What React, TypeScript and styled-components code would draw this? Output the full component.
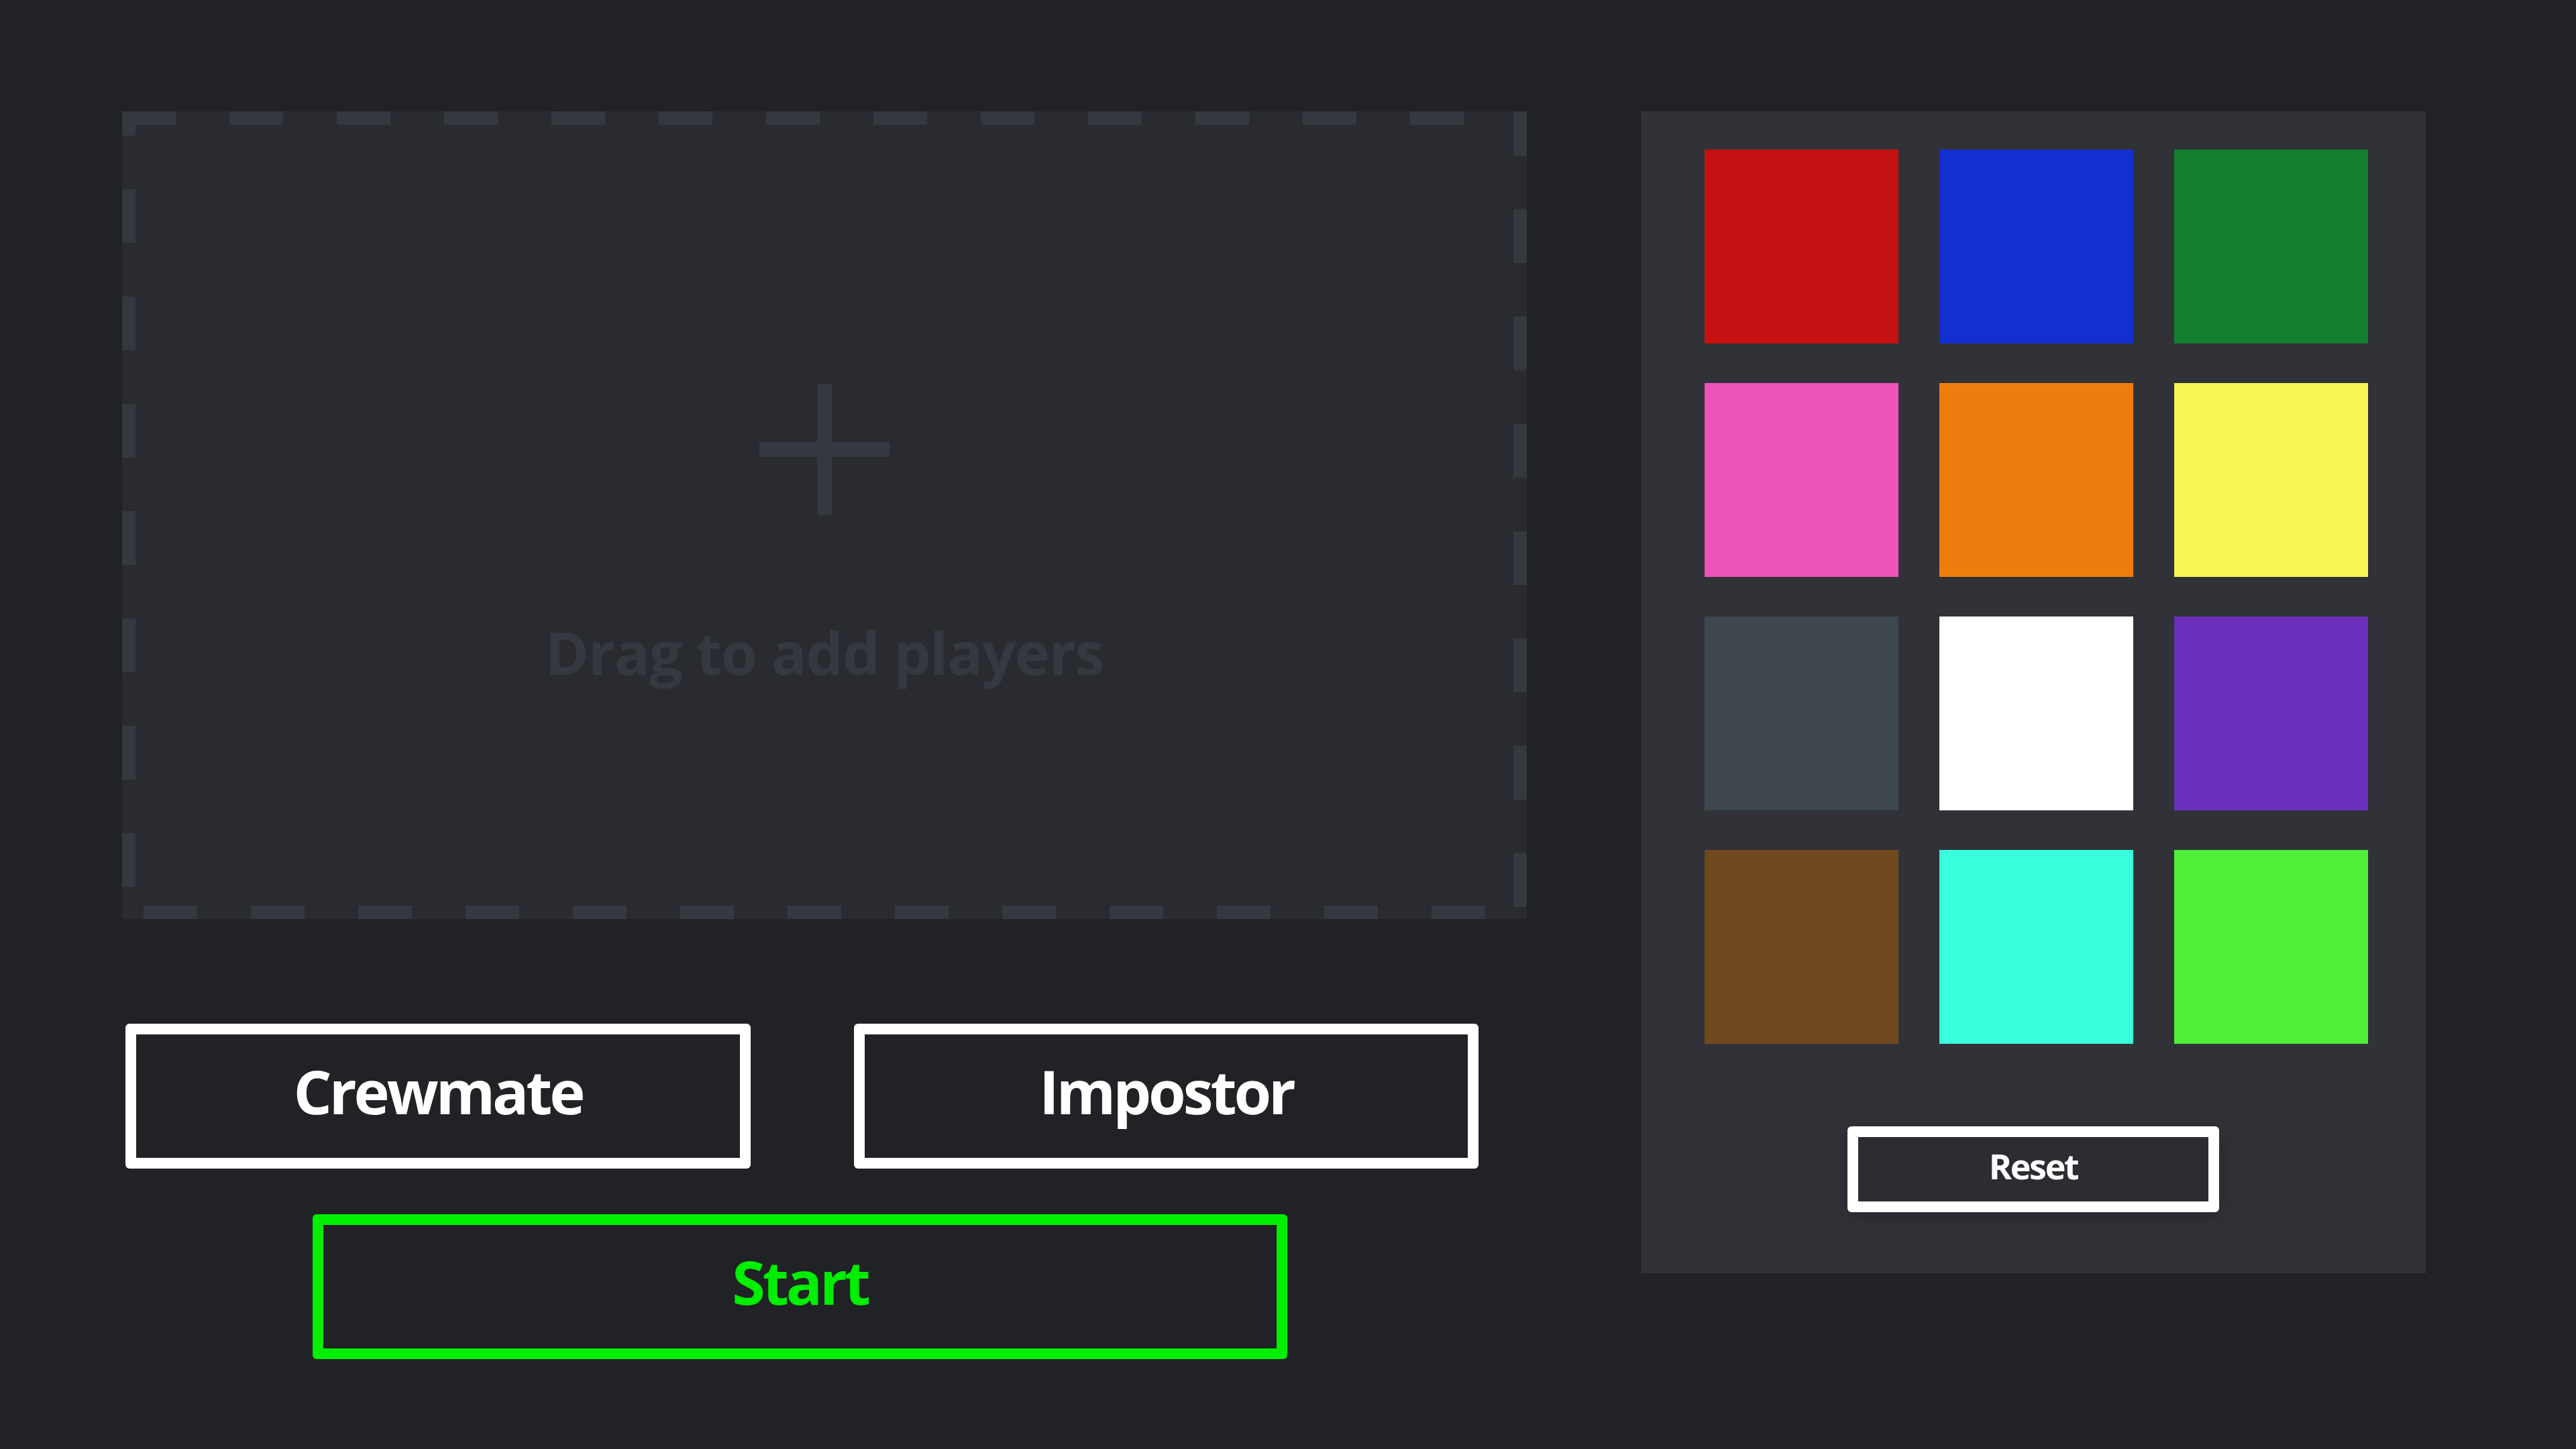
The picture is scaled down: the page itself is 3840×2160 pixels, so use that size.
import styled, { createGlobalStyle } from 'styled-components'

const GlobalStyle = createGlobalStyle`
  html, body {
    margin: 0;
    padding: 0;
    background: #212226;
  }
  body {
    font-family: "Open Sans", "Noto Sans", "Liberation Sans", sans-serif;
  }
`

const Page = styled.div`
  width: 3840px;
  height: 2160px;
  box-sizing: border-box;
  display: flex;
  align-items: flex-start;
  gap: 170px;
  padding: 166px 0 0 182px;
  background: #212226;
`

const LeftColumn = styled.div`
  display: flex;
  flex-direction: column;
  width: 2094px;
`

const DropZone = styled.div`
  position: relative;
  height: 1204px;
  box-sizing: border-box;
  padding-top: 407px;
  display: flex;
  flex-direction: column;
  align-items: center;
  background: #2a2b30;
`

const DashedEdge = styled.svg`
  position: absolute;
  inset: 0;
  width: 100%;
  height: 100%;
  pointer-events: none;
`

const Hint = styled.div`
  margin-top: 161px;
  font-size: 88px;
  font-weight: 700;
  line-height: 1;
  letter-spacing: -0.014em;
  color: #363840;
  white-space: nowrap;
`

const RoleRow = styled.div`
  display: flex;
  gap: 154px;
  padding-left: 5px;
  margin-top: 156px;
`

const OutlineButton = styled.button<{ $color: string; $bg: string; $w: number; $h: number; $size: number; $lift: number }>`
  width: ${p => p.$w}px;
  height: ${p => p.$h}px;
  box-sizing: border-box;
  display: flex;
  align-items: center;
  justify-content: center;
  padding: 0 0 ${p => p.$lift}px 0;
  border: 16px solid ${p => p.$color};
  border-radius: 6px;
  background: ${p => p.$bg};
  color: ${p => p.$color};
  font-family: inherit;
  font-size: ${p => p.$size}px;
  font-weight: 700;
  line-height: 1;
  letter-spacing: -0.045em;
  cursor: pointer;
`

const StartButton = styled(OutlineButton)`
  margin: 68px 0 0 284px;
`

const ResetButton = styled(OutlineButton)`
  margin-top: 123px;
  box-shadow: 0 6px 24px rgba(0, 0, 0, 0.22);
`

const Panel = styled.div`
  width: 1170px;
  height: 1732px;
  box-sizing: border-box;
  padding-top: 57px;
  display: flex;
  flex-direction: column;
  align-items: center;
  background: #313238;
`

const SwatchGrid = styled.div`
  display: grid;
  grid-template-columns: repeat(3, 289px);
  gap: 59px 61px;
  margin-left: 9px;
`

const Swatch = styled.div<{ $color: string }>`
  width: 289px;
  height: 289px;
  background: ${p => p.$color};
  cursor: pointer;
`

const colors = [
  '#c51111', '#132ed1', '#117f2d',
  '#ed54ba', '#ef7d0d', '#f6f657',
  '#3f474e', '#ffffff', '#6b2fbb',
  '#71491e', '#38fedc', '#50ef39',
]

const PlusIcon = () => (
  <svg width="194" height="194" viewBox="0 0 194 194">
    <rect x="86" y="0" width="22" height="194" fill="#363840" />
    <rect x="0" y="86" width="194" height="22" fill="#363840" />
  </svg>
)

export default function App() {
  return (
    <>
      <GlobalStyle />
      <Page>
        <LeftColumn>
          <DropZone>
            <DashedEdge>
              <rect x="0" y="0" width="100%" height="100%" fill="none" stroke="#363840" strokeWidth="40" strokeDasharray="80 80" />
            </DashedEdge>
            <PlusIcon />
            <Hint>Drag to add players</Hint>
          </DropZone>

          <RoleRow>
            <OutlineButton $color="#ffffff" $bg="#212226" $w={932} $h={216} $size={90} $lift={16}>
              Crewmate
            </OutlineButton>
            <OutlineButton $color="#ffffff" $bg="#212226" $w={931} $h={216} $size={90} $lift={16}>
              Impostor
            </OutlineButton>
          </RoleRow>

          <StartButton $color="#00ee00" $bg="#212226" $w={1453} $h={216} $size={90} $lift={16}>
            Start
          </StartButton>
        </LeftColumn>

        <Panel>
          <SwatchGrid>
            {colors.map(c => (
              <Swatch key={c} $color={c} />
            ))}
          </SwatchGrid>
          <ResetButton $color="#ffffff" $bg="#2c2d32" $w={554} $h={128} $size={52} $lift={10}>
            Reset
          </ResetButton>
        </Panel>
      </Page>
    </>
  )
}
